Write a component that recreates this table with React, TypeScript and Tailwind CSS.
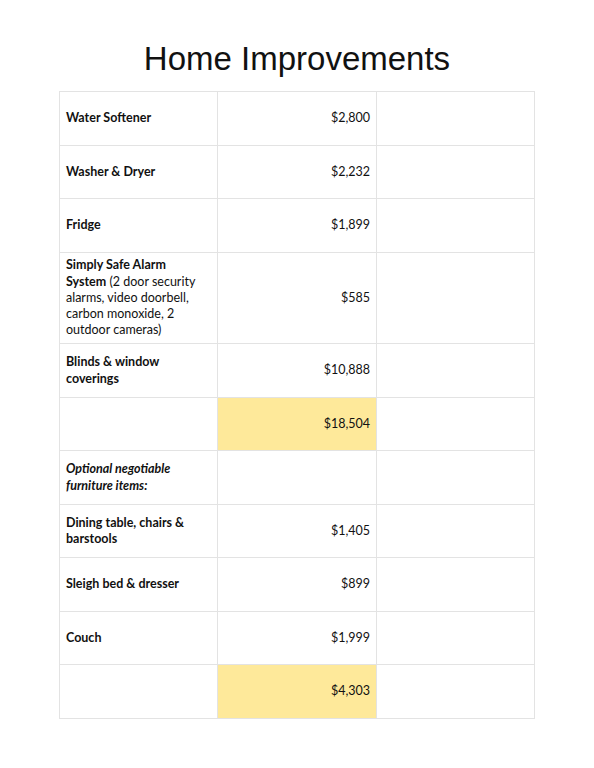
import React from "react";

type Row = { label: React.ReactNode; price?: string; h: number; total?: boolean };

const rows: Row[] = [
  { label: <b className="font-bold">Water Softener</b>, price: "$2,800", h: 54 },
  { label: <b className="font-bold">Washer &amp; Dryer</b>, price: "$2,232", h: 53 },
  { label: <b className="font-bold">Fridge</b>, price: "$1,899", h: 54 },
  {
    label: (
      <>
        <b className="font-bold">Simply Safe Alarm</b>
        <br />
        <b className="font-bold">System</b> (2 door security
        <br />
        alarms, video doorbell,
        <br />
        carbon monoxide, 2
        <br />
        outdoor cameras)
      </>
    ),
    price: "$585",
    h: 91,
  },
  {
    label: (
      <b className="font-bold">
        Blinds &amp; window
        <br />
        coverings
      </b>
    ),
    price: "$10,888",
    h: 54,
  },
  { label: null, price: "$18,504", h: 53, total: true },
  {
    label: (
      <b className="font-bold italic">
        Optional negotiable
        <br />
        furniture items:
      </b>
    ),
    h: 54,
  },
  {
    label: (
      <b className="font-bold">
        Dining table, chairs &amp;
        <br />
        barstools
      </b>
    ),
    price: "$1,405",
    h: 53,
  },
  { label: <b className="font-bold">Sleigh bed &amp; dresser</b>, price: "$899", h: 54 },
  { label: <b className="font-bold">Couch</b>, price: "$1,999", h: 53 },
  { label: null, price: "$4,303", h: 54, total: true },
];

export default function App() {
  return (
    <div className="w-[594px] h-[768px] bg-white" style={{ fontFamily: 'Lato, "Open Sans", sans-serif' }}>
      <div className="h-[91px] pt-[39px]">
        <h1
          className="text-center text-[33px] leading-[40px] font-normal text-[#111111]"
          style={{ fontFamily: '"Liberation Sans", Arial, sans-serif' }}
        >
          Home Improvements
        </h1>
      </div>
      <div className="ml-[59px] w-[476px] border-t border-l border-[#e3e3e3] grid grid-cols-[158px_159px_158px] text-[12.5px] leading-[16.3px] text-[#111111]">
        {rows.map((r, i) => (
          <React.Fragment key={i}>
            <div
              className="border-r border-b border-[#e3e3e3] flex items-center pl-[6px] pr-1"
              style={{ height: r.h }}
            >
              <div>{r.label}</div>
            </div>
            <div
              className={
                "border-r border-b border-[#e3e3e3] flex items-center justify-end pr-[6px] " +
                (r.total ? "bg-[#fee99a]" : "bg-white")
              }
              style={{ height: r.h }}
            >
              {r.price}
            </div>
            <div className="border-r border-b border-[#e3e3e3]" style={{ height: r.h }} />
          </React.Fragment>
        ))}
      </div>
    </div>
  );
}
